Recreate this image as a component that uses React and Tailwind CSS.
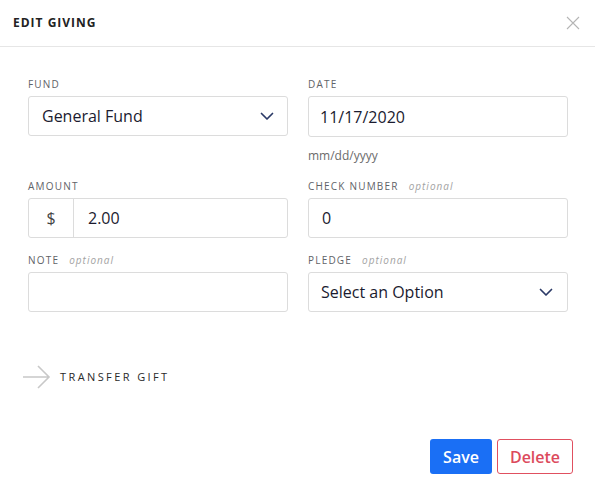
const font = { fontFamily: '"Open Sans", "Liberation Sans", sans-serif' };

function Chevron() {
  return (
    <svg width="16" height="10" viewBox="0 0 16 10" fill="none" stroke="#2b3a67" strokeWidth="1.7" strokeLinecap="round" strokeLinejoin="round">
      <path d="M2.5 2.5l5.5 5.5 5.5-5.5" />
    </svg>
  );
}

function Label({ text, optional }) {
  return (
    <div className="mb-[5px] flex h-[14px] items-center text-[10px] uppercase tracking-[1.2px] text-[#5f6368]">
      {text}
      {optional && <span className="ml-[10px] text-[10px] italic normal-case tracking-[1px] text-[#a3a3a3]">optional</span>}
    </div>
  );
}

function Box({ children, className = "" }) {
  return (
    <div className={"flex h-[40px] items-center rounded-[3px] border border-[#dcdcdc] bg-white text-base text-[#1b1b2f] " + className}>
      {children}
    </div>
  );
}

export default function App() {
  return (
    <div style={font} className="h-[490px] w-[595px] bg-white">
      <div className="flex h-[47px] items-center justify-between border-b border-[#e6e6e6] pl-[13px] pr-[15px]">
        <h2 className="text-[12px] font-bold tracking-[1px] text-[#222]">EDIT GIVING</h2>
        <svg width="14" height="14" viewBox="0 0 14 14" fill="none" stroke="#b5b5b5" strokeWidth="1.1">
          <path d="M1 1l12 12M13 1L1 13" />
        </svg>
      </div>

      <div className="grid grid-cols-2 gap-x-[20px] pl-[28px] pr-[27px] pt-[30px]">
        <div>
          <Label text="Fund" />
          <Box className="justify-between pl-[13px] pr-[12px]">
            <span>General Fund</span>
            <Chevron />
          </Box>
        </div>
        <div>
          <Label text="Date" />
          <Box className="h-[41px] pl-[11px]">11/17/2020</Box>
          <div className="mt-[10px] text-[12px] text-[#6b6b6b]">mm/dd/yyyy</div>
        </div>

        <div className="mt-[14px]">
          <Label text="Amount" />
          <Box>
            <div className="flex h-full w-[45px] items-center justify-center border-r border-[#dcdcdc] text-[#444]">$</div>
            <span className="pl-[14px]">2.00</span>
          </Box>
        </div>
        <div className="mt-[14px]">
          <Label text="Check Number" optional />
          <Box className="pl-[13px]">0</Box>
        </div>

        <div className="mt-[15px]">
          <Label text="Note" optional />
          <Box />
        </div>
        <div className="mt-[15px]">
          <Label text="Pledge" optional />
          <Box className="justify-between pl-[12px] pr-[13px]">
            <span>Select an Option</span>
            <Chevron />
          </Box>
        </div>
      </div>

      <div className="mt-[53px] flex items-center pl-[23px]">
        <svg width="28" height="24" viewBox="0 0 28 24" fill="none" stroke="#c8c8c8" strokeWidth="1.6">
          <path d="M0 12h26M15 1l11 11-11 11" />
        </svg>
        <span className="ml-[9px] text-[11px] tracking-[2.4px] text-[#2a2a2a]">TRANSFER GIFT</span>
      </div>

      <div className="mt-[50px] flex justify-end gap-[5px] pr-[22px]">
        <button className="h-[35px] w-[62px] rounded-[3px] bg-[#1a6ff5] text-base font-semibold text-white">Save</button>
        <button className="h-[35px] w-[76px] rounded-[3px] border border-[#e05060] bg-white text-base font-semibold text-[#dc4a5c]">Delete</button>
      </div>
    </div>
  );
}
